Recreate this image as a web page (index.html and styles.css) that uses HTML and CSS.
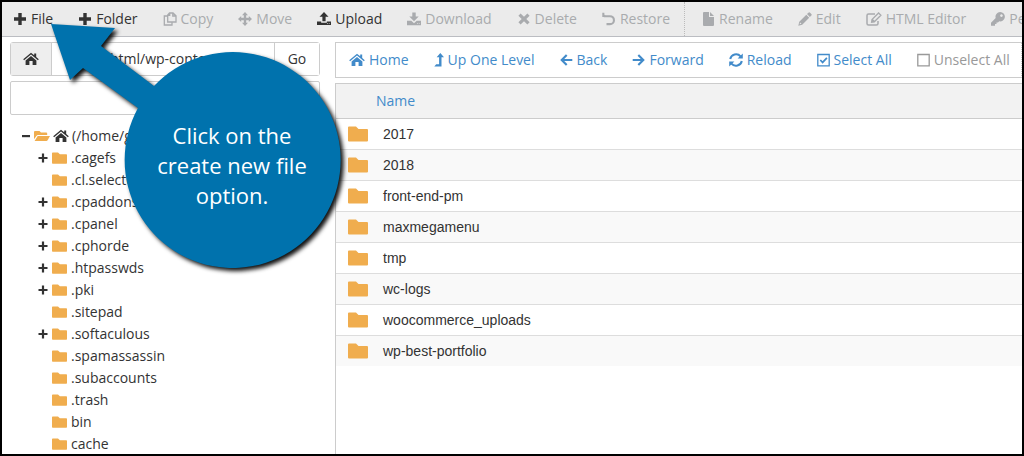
FILE: index.html
```html
<!DOCTYPE html>
<html lang="en">
<head>
<meta charset="utf-8">
<title>File Manager</title>
<link rel="stylesheet" href="styles.css">
</head>
<body>
<svg class="sprite" aria-hidden="true">
  <symbol id="plus" viewBox="0 0 14 14"><path d="M5.300 1h3.400v4.300H13v3.400H8.700V13H5.300V8.700H1V5.300h4.300z"/></symbol>
  <symbol id="minus" viewBox="0 0 10 14"><path d="M1 6h8v2.200H1z"/></symbol>
  <symbol id="small-plus" viewBox="0 0 10 14"><path d="M3.900 2.500h2.200v3.400h3.400v2.200H6.100v3.400H3.900V8.100H.5V5.900h3.400z"/></symbol>
  <symbol id="copy" viewBox="0 0 14 14"><path d="M6.500 1H10l3 2.800V10H4.700V3zM6.700 1v2.400H4.700M9.800 1v3H13M4.700 4H1.300v9H9v-3" fill="none" stroke="currentColor" stroke-width="1.300"/></symbol>
  <symbol id="move" viewBox="0 0 14 14"><path d="M7 0l3 3.200H8.200v2.600h2.600V4L14 7l-3.200 3V8.200H8.200v2.600H10L7 14l-3-3.200h1.800V8.200H3.200V10L0 7l3.200-3v1.800h2.600V3.200H4z"/></symbol>
  <symbol id="upload" viewBox="0 0 14 14"><path d="M7 0l4.500 4.800H8.600v4.400H5.400V4.800H2.500zM0 9.500h4.200v1.200h5.600V9.500H14V13H0zM10 11.200v.8h.8v-.8zm1.800 0v.8h.8v-.8z" fill-rule="evenodd"/></symbol>
  <symbol id="download" viewBox="0 0 14 14"><path d="M5.300.5h3.400v4h3L7 9.200 2.300 4.500h3zM0 8.800h4.300L7 11.200l2.700-2.400H14v4.400H0zM10 11.200v.8h.8v-.8zm1.800 0v.8h.8v-.8z" fill-rule="evenodd"/></symbol>
  <symbol id="delete" viewBox="0 0 12 14"><path d="M2.600 1.500L6 4.800l3.400-3.300 2.200 2.200L8.300 7l3.300 3.300-2.200 2.200L6 9.200l-3.400 3.300-2.200-2.200L3.700 7 .4 3.700z"/></symbol>
  <symbol id="restore" viewBox="0 0 14 14"><path d="M1.800 4.200H8a3.900 3.900 0 0 1 0 7.900H4.500" fill="none" stroke="currentColor" stroke-width="2.100"/><path d="M.3.700h2l.2 2.500 3.400 1.900H.3z"/></symbol>
  <symbol id="file" viewBox="0 0 11 14"><path d="M0 1Q0 0 1 0h5v5h5v8q0 1-1 1H1q-1 0-1-1zM7 0l4 4H7z"/></symbol>
  <symbol id="pencil" viewBox="0 0 14 14"><path d="M10.400.7q.8-.8 1.700 0l1.200 1.200q.9.900 0 1.700l-1.400 1.400-2.900-2.900zM8.300 2.800l2.900 2.900-7 7L.3 13.700l1-3.900zM2.100 10.400l-.5 1.900 1.900-.5z" fill-rule="evenodd"/></symbol>
  <symbol id="compose" viewBox="0 0 16 14"><path d="M9 2H2.500Q1 2 1 3.500v8Q1 13 2.500 13h8q1.500 0 1.500-1.500V9" fill="none" stroke="currentColor" stroke-width="1.500"/><path d="M12.600 1l2.300 2.300-6.600 6.500-2.700.5.400-2.700zM7 8l-.2 1.200L8 9z" fill="none" stroke="currentColor" stroke-width="1.300"/></symbol>
  <symbol id="key" viewBox="0 0 14 14"><path d="M9.200 0a4.700 4.700 0 1 1-1 9.300L7 10.500H5.500V12H4v1.800H0v-3l4.700-4.700A4.700 4.700 0 0 1 9.200 0zm1.200 2.300a1.300 1.300 0 1 0 .1 0z" fill-rule="evenodd"/></symbol>
  <symbol id="home" viewBox="0 0 16 14"><path d="M8 3.900l5.400 4.500V13H9.600V9H6.400v4H2.600V8.400zM8 .7L11.200 3.300V1.500h2v3.600L15.800 7.200l-.9 1.100L8 2.600 1.100 8.300.2 7.200z"/></symbol>
  <symbol id="level-up" viewBox="0 0 10 14"><path d="M6.300 0L10 4.300H7.500V13.500H.3L2.200 11.200h2.900V4.300H2.700z"/></symbol>
  <symbol id="left" viewBox="0 0 13 14"><path d="M12.300 7H2M6.700 2L1.700 7l5 5" fill="none" stroke="currentColor" stroke-width="2.100"/></symbol>
  <symbol id="right" viewBox="0 0 13 14"><path d="M.7 7H11M6.300 2l5 5-5 5" fill="none" stroke="currentColor" stroke-width="2.100"/></symbol>
  <symbol id="reload" viewBox="0 0 14 14"><path d="M1.200 6A6 6 0 0 1 11.600 3.300M12.800 8A6 6 0 0 1 2.400 10.700" fill="none" stroke="currentColor" stroke-width="2"/><path d="M13.800.6v5H8.600zM.2 13.400v-5h5.200z"/></symbol>
  <symbol id="checked" viewBox="0 0 13 14"><path d="M.8 1.500h11.400v11.400H.8z" fill="none" stroke="currentColor" stroke-width="1.300"/><path d="M3.300 7l2.300 2.400 4.300-4.600" fill="none" stroke="currentColor" stroke-width="1.700"/></symbol>
  <symbol id="unchecked" viewBox="0 0 13 14"><path d="M.8 1.500h11.400v11.400H.8z" fill="none" stroke="currentColor" stroke-width="1.300"/></symbol>
  <symbol id="folder" viewBox="0 0 20 16"><path d="M0 1.500Q0 .5 1 .5h7L10.500 3H19q1 0 1 1v10.500q0 1-1 1H1q-1 0-1-1z"/></symbol>
  <symbol id="folder-open" viewBox="0 0 16 14"><path d="M0 10.300V3q0-1 1-1h4.500L7 3.500h5.200q1 0 1 1V6H4Q3 6 2.400 6.900zM3.700 7H16l-2.400 4.300q-.4.700-1.200.7H.6z"/></symbol>
</svg>
<div class="app">
  <nav class="toolbar main-tools" aria-label="File actions">
    <button><svg class="w14"><use href="#plus"/></svg>File</button>
    <button><svg class="w14"><use href="#plus"/></svg>Folder</button>
    <button disabled><svg class="w14"><use href="#copy"/></svg>Copy</button>
    <button disabled><svg class="w14"><use href="#move"/></svg>Move</button>
    <button><svg class="w14"><use href="#upload"/></svg>Upload</button>
    <button disabled><svg class="w14"><use href="#download"/></svg>Download</button>
    <button disabled><svg class="w14"><use href="#delete"/></svg>Delete</button>
    <button disabled><svg class="w14"><use href="#restore"/></svg>Restore</button>
    <span class="divider"></span>
    <button disabled><svg class="w12"><use href="#file"/></svg>Rename</button>
    <button disabled><svg class="w14"><use href="#pencil"/></svg>Edit</button>
    <button disabled><svg class="w16"><use href="#compose"/></svg>HTML Editor</button>
    <button disabled><svg class="w14"><use href="#key"/></svg>Permissions</button>
  </nav>
  <div class="workspace">
    <aside class="sidebar">
      <form class="path">
        <button type="button" class="path-home" aria-label="Home"><svg class="w16"><use href="#home"/></svg></button>
        <input type="text" class="path-input" aria-label="Path" value="html/wp-content">
        <button type="button" class="path-go">Go</button>
      </form>
      <button class="collapse" aria-label="Collapse All"></button>
      <ul class="tree">
        <li><svg class="w10"><use href="#minus"/></svg><svg class="w16 gold"><use href="#folder-open"/></svg><svg class="w16"><use href="#home"/></svg>(/home/g</li>
        <li class="child"><svg class="w10"><use href="#small-plus"/></svg><svg class="leaf gold"><use href="#folder"/></svg>.cagefs</li>
        <li class="child"><span class="w10"></span><svg class="leaf gold"><use href="#folder"/></svg>.cl.selector</li>
        <li class="child"><svg class="w10"><use href="#small-plus"/></svg><svg class="leaf gold"><use href="#folder"/></svg>.cpaddons</li>
        <li class="child"><svg class="w10"><use href="#small-plus"/></svg><svg class="leaf gold"><use href="#folder"/></svg>.cpanel</li>
        <li class="child"><svg class="w10"><use href="#small-plus"/></svg><svg class="leaf gold"><use href="#folder"/></svg>.cphorde</li>
        <li class="child"><svg class="w10"><use href="#small-plus"/></svg><svg class="leaf gold"><use href="#folder"/></svg>.htpasswds</li>
        <li class="child"><svg class="w10"><use href="#small-plus"/></svg><svg class="leaf gold"><use href="#folder"/></svg>.pki</li>
        <li class="child"><span class="w10"></span><svg class="leaf gold"><use href="#folder"/></svg>.sitepad</li>
        <li class="child"><svg class="w10"><use href="#small-plus"/></svg><svg class="leaf gold"><use href="#folder"/></svg>.softaculous</li>
        <li class="child"><span class="w10"></span><svg class="leaf gold"><use href="#folder"/></svg>.spamassassin</li>
        <li class="child"><span class="w10"></span><svg class="leaf gold"><use href="#folder"/></svg>.subaccounts</li>
        <li class="child"><span class="w10"></span><svg class="leaf gold"><use href="#folder"/></svg>.trash</li>
        <li class="child"><span class="w10"></span><svg class="leaf gold"><use href="#folder"/></svg>bin</li>
        <li class="child"><span class="w10"></span><svg class="leaf gold"><use href="#folder"/></svg>cache</li>
      </ul>
    </aside>
    <main class="content">
      <nav class="toolbar list-tools" aria-label="Navigation">
        <button><svg class="w16"><use href="#home"/></svg>Home</button>
        <button><svg class="w10"><use href="#level-up"/></svg>Up One Level</button>
        <button><svg class="w12"><use href="#left"/></svg>Back</button>
        <button><svg class="w12"><use href="#right"/></svg>Forward</button>
        <button><svg class="w14"><use href="#reload"/></svg>Reload</button>
        <button><svg class="w12"><use href="#checked"/></svg>Select All</button>
        <button disabled><svg class="w12"><use href="#unchecked"/></svg>Unselect All</button>
      </nav>
      <div class="listing">
        <table>
          <thead><tr><th colspan="2" scope="col">Name</th></tr></thead>
          <tbody>
            <tr><td class="icon"><svg><use href="#folder"/></svg></td><td>2017</td></tr>
            <tr><td class="icon"><svg><use href="#folder"/></svg></td><td>2018</td></tr>
            <tr><td class="icon"><svg><use href="#folder"/></svg></td><td>front-end-pm</td></tr>
            <tr><td class="icon"><svg><use href="#folder"/></svg></td><td>maxmegamenu</td></tr>
            <tr><td class="icon"><svg><use href="#folder"/></svg></td><td>tmp</td></tr>
            <tr><td class="icon"><svg><use href="#folder"/></svg></td><td>wc-logs</td></tr>
            <tr><td class="icon"><svg><use href="#folder"/></svg></td><td>woocommerce_uploads</td></tr>
            <tr><td class="icon"><svg><use href="#folder"/></svg></td><td>wp-best-portfolio</td></tr>
          </tbody>
        </table>
      </div>
    </main>
  </div>
  <div class="callout">
    <svg class="callout-shape" viewBox="0 0 300 256" aria-hidden="true"><path d="M1 2L65 6 51 24 104 64A108 108 0 1 1 88 86L33 46 20 58z"/></svg>
    <p class="callout-text">Click on the<br>create new file<br>option.</p>
  </div>
</div>
</body>
</html>
```
FILE: styles.css
```css
* { box-sizing: border-box; }
body { margin: 0; font: 14px/20px "Open Sans", sans-serif; color: #333; background: #fff; }
button, input { font: inherit; color: inherit; }
svg { display: block; flex: none; height: 14px; fill: currentColor; }
.sprite { position: absolute; width: 0; height: 0; }
.app { position: relative; display: flex; flex-direction: column; height: 100vh; border: 2px solid #000; overflow: hidden; }

.toolbar { display: flex; overflow: hidden; flex: none; }
.toolbar button { display: flex; flex: none; align-items: center; gap: 4px; padding: 0 13px 0 12px; border: 0; background: none; white-space: nowrap; }
.main-tools { height: 35px; background: #ebebeb; border-bottom: 1px solid #bbbdc2; }
.main-tools button:first-child { padding-left: 11px; }
.main-tools button:disabled { color: #a9abae; }
.divider { flex: none; width: 6px; margin-left: 1px; border-left: 1px dotted #bbb; }
.list-tools { height: 36px; padding-left: 1px; border: 1px solid #ccc; border-right-style: dotted; color: #428bca; }
.list-tools button:disabled { color: #999; }

.w10 { width: 10px; }
.w12 { width: 13px; }
.w14 { width: 14px; }
.w16 { width: 16px; }
.gold { color: #f0ad4e; }
.leaf { width: 15px; height: 12px; }

.workspace { display: flex; flex: 1; min-height: 0; padding-top: 5px; }
.sidebar { flex: none; width: 333px; padding: 0 15px 0 8px; }
.path { display: flex; height: 34px; margin-bottom: 5px; border: 1px solid #ccc; border-radius: 3px; }
.path-home { display: flex; align-items: center; justify-content: center; width: 41px; padding: 0; border: 0; border-right: 1px solid #ccc; background: #eee; }
.path-input { flex: 1; min-width: 0; padding: 0 12px 0 58px; border: 0; }
.path-go { width: 45px; padding: 0; border: 0; border-left: 1px solid #ccc; background: #fff; }
.collapse { display: block; width: 100%; height: 34px; border: 1px solid #ccc; border-radius: 2px; background: #fff; }
.tree { margin: 10px 0 0; padding: 0; list-style: none; }
.tree li { display: flex; align-items: center; gap: 3px; height: 22px; padding-left: 11px; white-space: nowrap; }
.tree .child { gap: 4px; padding-left: 28px; }
.child .w10 { flex: none; }

.content { display: flex; flex: 1; flex-direction: column; min-width: 0; }
.listing { flex: 1; margin-top: 5px; border: solid #ccc; border-width: 1px 0 0 1px; }
table { width: 100%; border-collapse: collapse; font-family: "Liberation Sans", sans-serif; }
th { height: 34px; padding: 0 0 0 40px; background: #f2f2f2; border-bottom: 1px solid #ccc; color: #428bca; font-weight: 400; font-family: "Open Sans", sans-serif; text-align: left; }
td { height: 31px; padding: 0; border-bottom: 1px solid #ddd; }
tr:last-child td { border-bottom: 0; }
tbody tr:nth-child(even) { background: #f9f9f9; }
.icon { width: 47px; padding-left: 12px; color: #f0ad4e; }
.icon svg { width: 20px; height: 16px; }

.callout { position: absolute; left: 48px; top: 20px; width: 300px; }
.callout-shape { width: 300px; height: 256px; fill: #0072ad; filter: drop-shadow(3px 3px 2px #111); }
.callout-text { position: absolute; left: 74px; top: 98px; width: 216px; margin: 0; color: #fff; font-size: 22px; line-height: 30px; text-align: center; }
```
